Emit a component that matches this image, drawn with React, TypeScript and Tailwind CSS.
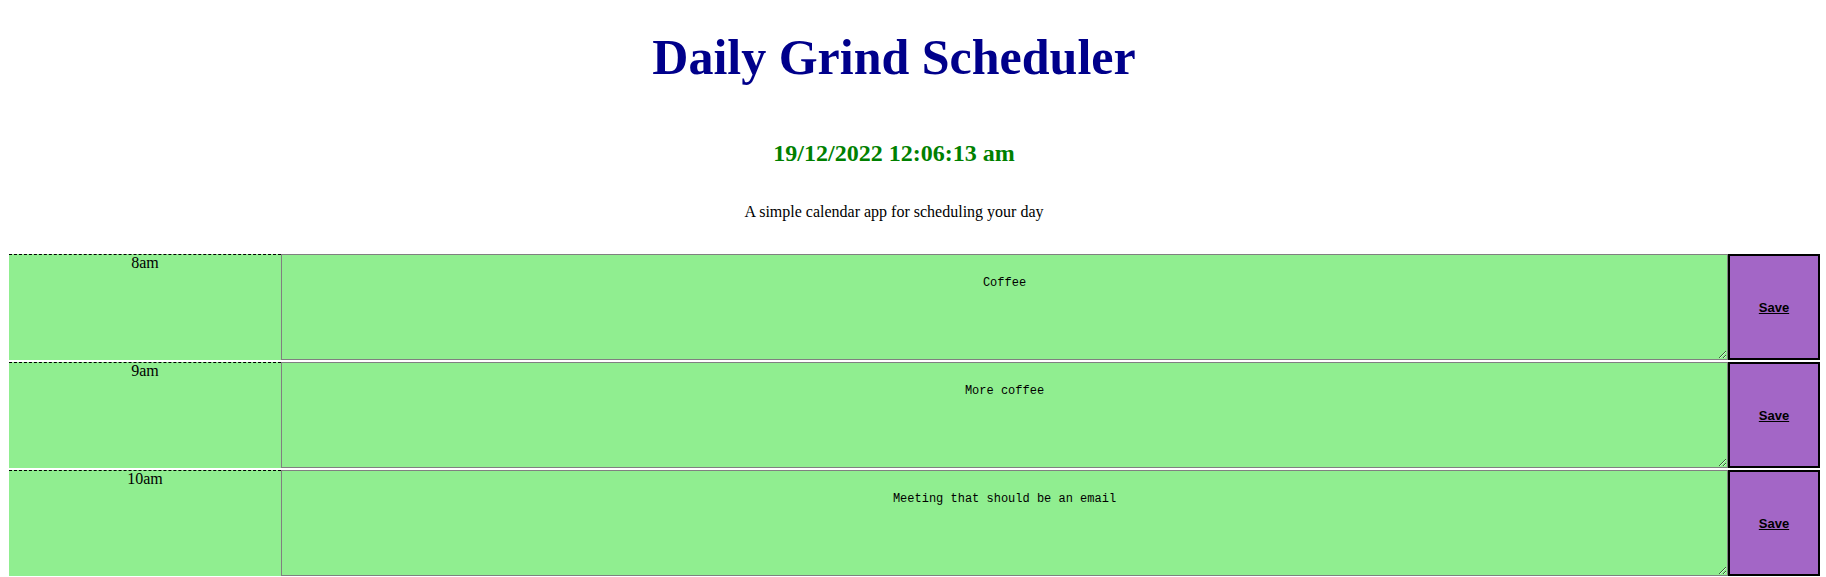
import React from "react";

const blocks = [
  { hour: "8am", text: "Coffee" },
  { hour: "9am", text: "More coffee" },
  { hour: "10am", text: "Meeting that should be an email" },
];

function TimeBlock({ hour, text }: { hour: string; text: string }) {
  return (
    <div className="flex h-[106px]">
      <div className="w-[272px] shrink-0 border-t border-dashed border-black bg-[#90ee90] text-center text-[16px] leading-[16px] text-black">
        {hour}
      </div>
      <textarea
        className="w-[1447px] shrink-0 resize border border-[#808080] bg-[#90ee90] pt-[21px] text-center font-['Liberation_Mono',monospace] text-[12px] leading-[14px] text-black outline-none"
        defaultValue={text}
      />
      <button className="w-[92px] shrink-0 border-2 border-black bg-[#a366c6] font-['Liberation_Sans',sans-serif] text-[13px] font-bold text-black underline">
        Save
      </button>
    </div>
  );
}

export default function App() {
  return (
    <div className="min-h-[577px] bg-white font-['Liberation_Serif',serif]">
      <header className="flex flex-col items-center pt-[29px] pr-[38px]">
        <h1 className="text-[50px] font-bold leading-[1.15] text-[#00008b]">Daily Grind Scheduler</h1>
        <p className="mt-[53px] text-[24px] font-bold leading-[1.15] text-[#008000]">19/12/2022 12:06:13 am</p>
        <p className="mt-[36px] text-[16px] leading-[1.15] text-black">A simple calendar app for scheduling your day</p>
      </header>
      <main className="mt-[33px] flex flex-col gap-[2px] pl-[9px]">
        {blocks.map((b) => (
          <TimeBlock key={b.hour} hour={b.hour} text={b.text} />
        ))}
      </main>
    </div>
  );
}
